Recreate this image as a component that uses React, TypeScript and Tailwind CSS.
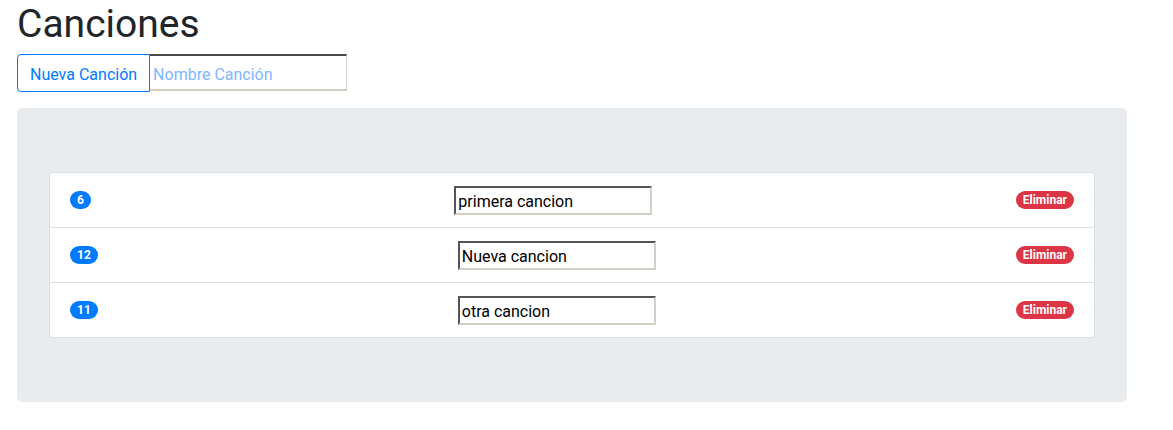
import React from "react";

const songs = [
  { id: 6, name: "primera cancion" },
  { id: 12, name: "Nueva cancion" },
  { id: 11, name: "otra cancion" },
];

const font = { fontFamily: "Roboto, 'Noto Sans', sans-serif" };

export default function App() {
  return (
    <div className="pl-[17px] pr-[46px] bg-white min-h-[430px] text-[#212529]" style={font}>
      <h1 className="text-[39px] leading-[48px] font-normal mb-[6px] mt-0 text-[#212529]">Canciones</h1>
      <div className="flex">
        <button className="h-[38px] px-[12px] pt-[3px] text-[16px] text-[#007bff] border border-[#007bff] rounded-l-[4px] bg-white">
          Nueva Canción
        </button>
        <input
          className="h-[37px] w-[197px] text-[16px] px-[3px] pt-[3px] border-t-2 border-r border-b-2 border-t-[#4a4a4a] border-r-[#d4d0c8] border-b-[#d4d0c8] placeholder:text-[#80b6ff] outline-none"
          placeholder="Nombre Canción"
        />
      </div>
      <div className="mt-[16px] bg-[#e9ecef] rounded-[5px] pt-[64px] pb-[64px] px-[32px]">
        <ul className="bg-white border border-[#dcdfe2] rounded-[4px]">
          {songs.map((s, i) => (
            <li
              key={s.id}
              className={`flex items-center justify-between px-[20px] ${i > 0 ? "h-[55px] border-t border-[#dcdfe2]" : "h-[54px]"}`}
            >
              <span className="bg-[#007bff] text-white text-[12px] font-bold leading-none rounded-full px-[7px] py-[3px]">
                {s.id}
              </span>
              <input
                defaultValue={s.name}
                className="w-[198px] h-[29px] text-[16px] px-[2px] pt-[2px] text-black border-2 border-t-[#555] border-l-[#555] border-b-[#d4d0c8] border-r-[#d4d0c8] outline-none"
              />
              <span className="bg-[#dc3545] text-white text-[12px] font-bold leading-none rounded-full px-[7px] py-[3px]">
                Eliminar
              </span>
            </li>
          ))}
        </ul>
      </div>
    </div>
  );
}
